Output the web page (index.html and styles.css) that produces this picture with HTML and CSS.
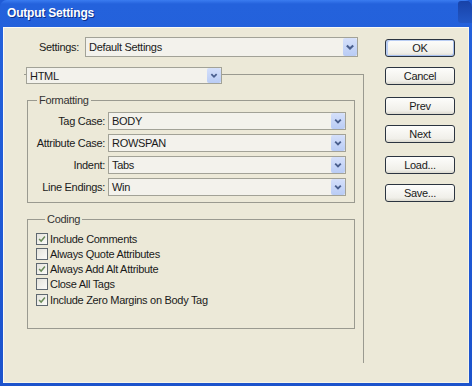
FILE: index.html
```html
<!DOCTYPE html>
<html lang="en">
<head>
  <meta charset="utf-8" />
  <title>Output Settings</title>
  <link rel="stylesheet" href="styles.css">
</head>
<body>
  <div class="window">
    <div class="titlebar">
      <span class="title">Output Settings</span>
      <span class="close"></span>
    </div>

    <div class="client">
      <div class="main">
        <div class="settings-row">
          <label class="lbl">Settings:</label>
          <div class="select wide"><span class="val">Default Settings</span><span class="arrow"><svg viewBox="0 0 13 17"><path d="M3.5 7 L6.5 10 L9.5 7" /></svg></span></div>
        </div>

        <div class="panel">
          <div class="select panel-select"><span class="val">HTML</span><span class="arrow"><svg viewBox="0 0 13 17"><path d="M3.5 7 L6.5 10 L9.5 7" /></svg></span></div>

          <fieldset class="group formatting">
            <legend>Formatting</legend>
            <div class="field">
              <label class="lbl">Tag Case:</label>
              <div class="select"><span class="val">BODY</span><span class="arrow"><svg viewBox="0 0 13 17"><path d="M3.5 7 L6.5 10 L9.5 7" /></svg></span></div>
            </div>
            <div class="field">
              <label class="lbl">Attribute Case:</label>
              <div class="select"><span class="val">ROWSPAN</span><span class="arrow"><svg viewBox="0 0 13 17"><path d="M3.5 7 L6.5 10 L9.5 7" /></svg></span></div>
            </div>
            <div class="field">
              <label class="lbl">Indent:</label>
              <div class="select"><span class="val">Tabs</span><span class="arrow"><svg viewBox="0 0 13 17"><path d="M3.5 7 L6.5 10 L9.5 7" /></svg></span></div>
            </div>
            <div class="field">
              <label class="lbl">Line Endings:</label>
              <div class="select"><span class="val">Win</span><span class="arrow"><svg viewBox="0 0 13 17"><path d="M3.5 7 L6.5 10 L9.5 7" /></svg></span></div>
            </div>
          </fieldset>

          <fieldset class="group coding">
            <legend>Coding</legend>
            <div class="check on"><span class="box"><svg viewBox="0 0 12 12"><path d="M2.5 6 L5 8.5 L9.5 3" /></svg></span>Include Comments</div>
            <div class="check"><span class="box"></span>Always Quote Attributes</div>
            <div class="check on"><span class="box"><svg viewBox="0 0 12 12"><path d="M2.5 6 L5 8.5 L9.5 3" /></svg></span>Always Add Alt Attribute</div>
            <div class="check"><span class="box"></span>Close All Tags</div>
            <div class="check on"><span class="box"><svg viewBox="0 0 12 12"><path d="M2.5 6 L5 8.5 L9.5 3" /></svg></span>Include Zero Margins on Body Tag</div>
          </fieldset>
        </div>
      </div>

      <div class="side">
        <button class="btn default">OK</button>
        <button class="btn">Cancel</button>
        <button class="btn gap">Prev</button>
        <button class="btn">Next</button>
        <button class="btn gap2">Load...</button>
        <button class="btn">Save...</button>
      </div>
    </div>
  </div>
</body>
</html>
```

FILE: styles.css
```css
:root{
  --face: #ece9d8;
  --xp-blue: #1f5bd6;
  --line: #9a9a90;
  --field-border: #a2a297;
}
html, body{ margin:0; padding:0; }
body{
  width:472px; height:386px; overflow:hidden;
  font-family: "Liberation Sans", Arial, sans-serif;
  font-size: 11px; letter-spacing: -0.3px; color:#1a1a1a;
  background: var(--xp-blue);
}

.window{
  width:472px; height:386px; box-sizing:border-box;
  display:flex; flex-direction:column;
  background: linear-gradient(180deg, #3a7cf0 0, #2462dc 4px, #1f59d5 60%, #1c53cc 100%);
  border-radius: 7px 7px 0 0;
  overflow:hidden;
}

/* title bar */
.titlebar{
  height:27px; flex:none;
  display:flex; align-items:center; justify-content:space-between;
  padding: 0 0 0 7px;
}
.title{
  color:#fff; font-weight:700; font-size:12px; letter-spacing:-0.2px;
  text-shadow: 1px 1px 0 #0c2f8a;
  padding-bottom:2px;
}
.close{
  width:14px; height:22px; margin-top:-4px;
  background: linear-gradient(180deg, #1842a8, #2358c6);
  border-radius: 3px 0 0 3px;
}

/* dialog body */
.client{
  flex:1;
  margin: 0 3px 3px 3px;
  background: var(--face);
  box-shadow: inset 1px 1px 0 #fbfaf5, inset -1px -1px 0 #f6f4ea;
  display:flex;
}
.main{ width:382px; flex:none; }

.settings-row{
  display:flex; align-items:center; gap:6px;
  margin-top:10px;
}
.settings-row .lbl{ width:76px; text-align:right; }

/* combo boxes */
.select{
  box-sizing:border-box;
  display:flex; align-items:center; justify-content:space-between;
  height:18px;
  background:#f3f2ec;
  border:1px solid var(--field-border);
  padding-left:3px;
}
.select.wide{ width:273px; height:20px; }
.select .val{ white-space:nowrap; }
.select .arrow{
  width:14px; height:100%; flex:none;
  background: linear-gradient(180deg, #d5e0fa, #b9ccf5);
  border-radius:2px;
  display:flex;
}
.select .arrow svg{ width:14px; height:100%; }
.select .arrow path{ fill:none; stroke:#4a5f8e; stroke-width:2; }

/* HTML panel */
.panel{
  margin: 17px 0 0 21px;
  width:340px; height:289px; box-sizing:border-box;
  border-top:1px solid var(--line);
  border-right:1px solid var(--line);
  padding-left:3px;
}
.panel-select{
  width:196px; height:17px;
  margin: -8px 0 0 -1px;
}

/* group boxes */
.group{
  margin:10px 0 0 0;
  width:328px; box-sizing:border-box;
  border:1px solid var(--line);
  padding: 5px 8px 6px 0;
  min-width:0;
}
.group legend{
  padding:0 2px;
  margin-left:9px;
  line-height:13px;
  color:#333;
}

.field{
  display:flex; align-items:center; gap:3px;
  height:18px;
}
.field + .field{ margin-top:4px; }
.field .lbl{ width:77px; text-align:right; white-space:nowrap; }
.field .select{ flex:1; }

.coding{ padding: 5px 8px 21px 8px; }
.check{
  display:flex; align-items:center; gap:2px;
  height:15.25px; white-space:nowrap;
}
.check .box{
  width:12px; height:12px; box-sizing:border-box; flex:none;
  border:1px solid #5f6870;
  background: linear-gradient(135deg, #e4e3dc, #fbfbf8);
  display:flex;
}
.check .box svg{ width:100%; height:100%; }
.check .box path{ fill:none; stroke:#6a8a58; stroke-width:1.8; }

/* side buttons */
.side{
  display:flex; flex-direction:column; gap:10px;
  padding-top:12px;
}
.btn{
  width:70px; height:18px; padding:0;
  font: 11px "Liberation Sans", Arial, sans-serif; letter-spacing:-0.3px; color:#1a1a1a;
  border:1px solid #2b3440; border-radius:3px;
  background: linear-gradient(180deg, #fdfdfb, #f0efe9 80%, #dcdad0);
  line-height:16px;
}
.btn.default{ box-shadow: inset 2px 1px 0 #b9cdf3, inset -1px -1px 0 #a8c0ef; }
.btn.gap{ margin-top:2px; }
.btn.gap2{ margin-top:3px; }
```
